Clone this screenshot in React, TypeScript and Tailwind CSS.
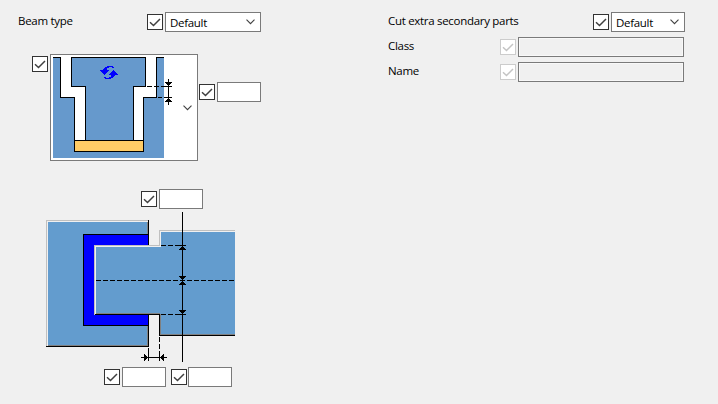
import { clsx } from "clsx";

const CheckBox = ({
  disabled,
  className,
}: Readonly<{ disabled?: boolean; className?: string }>) => (
  <span
    role="checkbox"
    aria-checked="true"
    aria-disabled={disabled}
    className={clsx(
      "block size-4 shrink-0 border bg-white",
      disabled ? "border-[#cccccc] text-[#c4c4c4]" : "border-[#333333] text-[#404040]",
      className,
    )}
  >
    <svg viewBox="0 0 14 14" className="block size-3.5" fill="none">
      <path d="M2 7.3 5.5 10.5 12 4" stroke="currentColor" strokeWidth="1.5" />
    </svg>
  </span>
);

const Field = ({
  disabled,
  className,
}: Readonly<{ disabled?: boolean; className?: string }>) => (
  <input
    disabled={disabled}
    className={clsx(
      "block h-5 border border-[#7a7a7a] px-1 outline-none",
      disabled ? "bg-[#f0f0f0] shadow-[inset_0_0_0_1px_#f8f8f8]" : "bg-white",
      className,
    )}
  />
);

const Chevron = () => (
  <svg width="9" height="6" viewBox="0 0 9 6" className="block" fill="none">
    <path d="M.5 .7 4.5 4.7 8.5 .7" stroke="#404040" strokeWidth="1.1" />
  </svg>
);

const Select = ({ value, className }: Readonly<{ value: string; className?: string }>) => (
  <button
    className={clsx(
      "flex h-5 items-center justify-between border border-[#7a7a7a] bg-white pr-[5px] pl-1",
      className,
    )}
  >
    <span className="pt-px">{value}</span>
    <Chevron />
  </button>
);

const ProfilePicture = () => (
  <svg width="121" height="101" viewBox="53 57 121 101" shapeRendering="crispEdges">
    <path fill="#6699cc" d="M53 57h111v101H53z" />
    <path fill="#fff" d="M61 57h10v30h14v53H75V97H61zM146 57h10v40h-13v43h-9V87h12z" />
    <path fill="#ffcc66" d="M75 141h68v10H75z" />
    <g fill="none" stroke="#000">
      <path d="M53 57.5h7.5v40h14v54h69v-54h13v-40h7.5" />
      <path d="M71.5 57.5h74v29h-12v54M71.5 57v29.5h14v54M74 140.5h70" />
      <path d="M147 86.5h17" strokeDasharray="5 2" />
      <path d="M158 97.5h6" strokeDasharray="4 2" />
      <path d="M164 86.5h8M164 97.5h8M168.5 79v26" />
    </g>
    <path d="M165 82h7v1h-1v1h-1v1h-1v1h-1v-1h-1v-1h-1v-1h-1zM168 98h1v1h1v1h1v1h1v1h-7v-1h1v-1h1v-1h1z" />
    {/* rotate symbol, two arrows mirrored through the centre */}
    <g fill="none" stroke="#0000ff">
      <path
        id="turn"
        d="M107 66.5h6M105 67.5h4M112 67.5h2M104 68.5h3M103 69.5h4M100 70.5h9M101 71.5h7M102 72.5h5M103 73.5h3M104 74.5h1"
      />
      <use href="#turn" transform="rotate(180 109 72.5)" />
    </g>
  </svg>
);

const CutPicture = () => (
  <svg
    width="189"
    height="150"
    viewBox="46 212 189 150"
    className="block"
    shapeRendering="crispEdges"
  >
    {/* supporting part */}
    <path fill="#c0c0c0" d="M46 220h103v126H46z" />
    <path fill="#f0f0f0" d="M47 221h101v125H47z" />
    <path fill="#639cce" d="M48 222h100v124H48z" />
    <path fill="#808080" d="M147 222h1v123h-1zM48 345h100v1H48z" />
    <path d="M148 220h1v127h-1zM46 346h103v1H46z" />
    <path d="M83 234h66v92H83z" />
    <path fill="#0000ff" d="M84 235h64v90H84z" />

    {/* beam */}
    <path fill="#c0c0c0" d="M94 245h66v70H94z" />
    <path fill="#f0f0f0" d="M95 246h66v68H95z" />
    <path fill="#c0c0c0" d="M159 230h76v16h-76z" />
    <path fill="#f0f0f0" d="M160 231h75v16h-75zM149 315h10v21h-10z" />
    <path fill="#639cce" d="M96 247h65v67H96zM161 232h74v103h-74z" />
    <path fill="#808080" d="M96 313h64v1H96zM160 314h1v20h-1zM160 334h75v1h-75z" />
    <path d="M95 314h65v1H95zM159 314h1v22h-1zM159 335h76v1h-76z" />

    <g fill="none" stroke="#000">
      <path d="M96 280.5h139" strokeDasharray="5 2" />
      <path d="M161 245.5h17M161 314.5h17" strokeDasharray="5 2" />
      <path d="M178 245.5h8M178 314.5h8M182.5 212v150" />
      <path d="M148.5 348v6M159.5 337v16" strokeDasharray="5 2" />
      <path d="M148.5 353v8M159.5 353v8M141 357.5h26" />
    </g>
    <path d="M182 246h1v1h1v1h1v1h1v1h-7v-1h1v-1h1v-1h1zM182 281h1v1h1v1h1v1h1v1h-7v-1h1v-1h1v-1h1z" />
    <path d="M179 276h7v1h-1v1h-1v1h-1v1h-1v-1h-1v-1h-1v-1h-1zM179 310h7v1h-1v1h-1v1h-1v1h-1v-1h-1v-1h-1v-1h-1z" />
    <path d="M144 354h1v1h1v1h1v1h1v1h-1v1h-1v1h-1v1h-1zM163 354h1v7h-1v-1h-1v-1h-1v-1h-1v-1h1v-1h1v-1h1z" />
  </svg>
);

const BeamPanel = () => (
  <section className="w-[388px] shrink-0 pt-3">
    <div className="flex items-start pl-[18px]">
      <span className="w-[129px] pt-px">Beam type</span>
      <CheckBox className="mt-0.5 mr-0.5" />
      <Select value="Default" className="w-24" />
    </div>

    <div className="mt-[22px] flex items-start pl-8">
      <CheckBox className="mt-0.5 mr-0.5" />
      <button className="flex h-[107px] w-[148px] items-center justify-between border border-[#7a7a7a] bg-white pr-[5px] pl-0.5">
        <ProfilePicture />
        <Chevron />
      </button>
      <div className="mt-7 ml-px flex items-center gap-0.5">
        <CheckBox />
        <Field className="w-11" />
      </div>
    </div>

    <div className="mt-7 flex items-center gap-0.5 pl-[141px]">
      <CheckBox />
      <Field className="w-11" />
    </div>
    <div className="mt-[3px] pl-[46px]">
      <CutPicture />
    </div>
    <div className="mt-[5px] flex items-center pl-[104px]">
      <CheckBox className="mr-0.5" />
      <Field className="mr-[5px] w-11" />
      <CheckBox className="mr-px" />
      <Field className="w-11" />
    </div>
  </section>
);

const PartsPanel = () => (
  <section className="flex flex-1 flex-col gap-[5px] pt-3">
    <div className="flex items-start">
      <span className="w-[205px] pt-px">Cut extra secondary parts</span>
      <CheckBox className="mt-0.5 mr-0.5" />
      <Select value="Default" className="w-[74px]" />
    </div>
    {["Class", "Name"].map((label) => (
      <div key={label} className="flex items-start">
        <span className="w-28 pt-px">{label}</span>
        <CheckBox disabled className="mt-0.5 mr-0.5" />
        <Field disabled className="w-[166px]" />
      </div>
    ))}
  </section>
);

export default function App() {
  return (
    <main className="flex h-[404px] w-[718px] overflow-hidden bg-[#f0f0f0] font-['Open_Sans','Noto_Sans',sans-serif] text-[11.5px] leading-[15px] tracking-[-0.3px] whitespace-nowrap text-black">
      <BeamPanel />
      <PartsPanel />
    </main>
  );
}
